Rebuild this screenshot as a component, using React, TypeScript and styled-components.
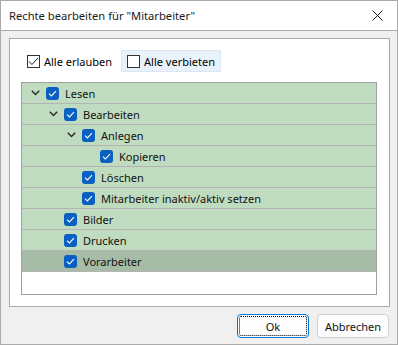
import React from "react";
import styled, { createGlobalStyle } from "styled-components";

const GlobalStyle = createGlobalStyle`
  html, body {
    margin: 0;
    padding: 0;
    background: #ffffff;
  }
  body {
    font-family: "Noto Sans", "Open Sans", sans-serif;
    font-size: 11px;
    color: #000;
  }
`;

const Window = styled.div`
  width: 398px;
  height: 345px;
  box-sizing: border-box;
  border: 1px solid #ababab;
  display: flex;
  flex-direction: column;
  background: #f0f0f0;
`;

const TitleBar = styled.div`
  height: 29px;
  flex: none;
  background: #ffffff;
  border-bottom: 1px solid #ababab;
  display: flex;
  align-items: center;
  justify-content: space-between;
  padding: 0 14px 0 8px;
`;

const Title = styled.span`
  font-size: 11.2px;
  color: #1a1a1a;
`;

const CloseButton = styled.div`
  width: 12px;
  height: 12px;
  display: flex;
  align-items: center;
  justify-content: center;
`;

const Body = styled.div`
  flex: 1;
  display: flex;
  flex-direction: column;
  padding: 7px 7px 6px 8px;
  gap: 7px;
`;

const Panel = styled.div`
  flex: 1;
  background: #ffffff;
  border: 1px solid #ababab;
  padding: 11px 12px 11px 11px;
  display: flex;
  flex-direction: column;
  gap: 10px;
`;

const OptionRow = styled.div`
  display: flex;
  gap: 3px;
`;

const Option = styled.label<{ $focused?: boolean }>`
  height: 22px;
  box-sizing: border-box;
  display: flex;
  align-items: center;
  gap: 4px;
  padding: 0 5px;
  background: ${(p) => (p.$focused ? "#e9f1fb" : "transparent")};
  border: 1px solid ${(p) => (p.$focused ? "#dce7f4" : "transparent")};
`;

const PlainBox = styled.span`
  width: 13px;
  height: 13px;
  box-sizing: border-box;
  border: 1px solid #333333;
  background: #fff;
  display: flex;
  align-items: center;
  justify-content: center;
`;

const Tree = styled.div`
  flex: 1;
  border: 1px solid #a0a0a0;
  background: #ffffff;
  display: flex;
  flex-direction: column;
`;

const Row = styled.div<{ $level: number; $selected?: boolean }>`
  height: 20px;
  flex: none;
  border-bottom: 1px solid #b4b4b4;
  background: ${(p) => (p.$selected ? "#a6bca6" : "#c0dcc0")};
  display: flex;
  align-items: center;
  padding-left: ${(p) => 4 + p.$level * 18}px;
`;

const Toggle = styled.span`
  width: 18px;
  height: 20px;
  flex: none;
  display: flex;
  align-items: center;
  justify-content: center;
  margin-right: 2px;
`;

const BlueBox = styled.span`
  width: 13px;
  height: 13px;
  border-radius: 3px;
  background: #0a5fc2;
  flex: none;
  display: flex;
  align-items: center;
  justify-content: center;
  margin-right: 6px;
`;

const RowLabel = styled.span`
  white-space: nowrap;
  color: #111;
`;

const Footer = styled.div`
  display: flex;
  justify-content: flex-end;
  gap: 8px;
  padding-right: 1px;
`;

const Button = styled.button<{ $default?: boolean }>`
  width: 72px;
  height: 24px;
  box-sizing: border-box;
  font-family: inherit;
  font-size: 11px;
  color: #111;
  background: #fdfdfd;
  border: 1px solid ${(p) => (p.$default ? "#0078d4" : "#d0d0d0")};
  border-radius: 4px;
  padding: 0;
  outline: ${(p) => (p.$default ? "1px dotted #000" : "none")};
  outline-offset: -3px;
`;

const Chevron = () => (
  <svg width="9" height="6" viewBox="0 0 9 6">
    <path d="M0.8 0.8 L4.5 4.5 L8.2 0.8" fill="none" stroke="#2b2b2b" strokeWidth="1.5" />
  </svg>
);

const WhiteCheck = () => (
  <svg width="9" height="7" viewBox="0 0 9 7">
    <path d="M1 3.6 L3.4 6 L8 1.2" fill="none" stroke="#ffffff" strokeWidth="1.1" />
  </svg>
);

const DarkCheck = () => (
  <svg width="11" height="9" viewBox="0 0 11 9">
    <path d="M1 4.4 L3.9 7.5 L10 1" fill="none" stroke="#222" strokeWidth="1" />
  </svg>
);

type Item = { label: string; level: number; expandable?: boolean; selected?: boolean };

const items: Item[] = [
  { label: "Lesen", level: 0, expandable: true },
  { label: "Bearbeiten", level: 1, expandable: true },
  { label: "Anlegen", level: 2, expandable: true },
  { label: "Kopieren", level: 3 },
  { label: "Löschen", level: 2 },
  { label: "Mitarbeiter inaktiv/aktiv setzen", level: 2 },
  { label: "Bilder", level: 1 },
  { label: "Drucken", level: 1 },
  { label: "Vorarbeiter", level: 1, selected: true },
];

export default function App() {
  return (
    <>
      <GlobalStyle />
      <Window>
        <TitleBar>
          <Title>Rechte bearbeiten für "Mitarbeiter"</Title>
          <CloseButton>
            <svg width="11" height="11" viewBox="0 0 11 11">
              <path d="M0.5 0.5 L10.5 10.5 M10.5 0.5 L0.5 10.5" stroke="#1a1a1a" strokeWidth="1" />
            </svg>
          </CloseButton>
        </TitleBar>
        <Body>
          <Panel>
            <OptionRow>
              <Option>
                <PlainBox>
                  <DarkCheck />
                </PlainBox>
                Alle erlauben
              </Option>
              <Option $focused>
                <PlainBox />
                Alle verbieten
              </Option>
            </OptionRow>
            <Tree>
              {items.map((it) => (
                <Row key={it.label} $level={it.level} $selected={it.selected}>
                  <Toggle>{it.expandable && <Chevron />}</Toggle>
                  <BlueBox>
                    <WhiteCheck />
                  </BlueBox>
                  <RowLabel>{it.label}</RowLabel>
                </Row>
              ))}
            </Tree>
          </Panel>
          <Footer>
            <Button $default>Ok</Button>
            <Button>Abbrechen</Button>
          </Footer>
        </Body>
      </Window>
    </>
  );
}
